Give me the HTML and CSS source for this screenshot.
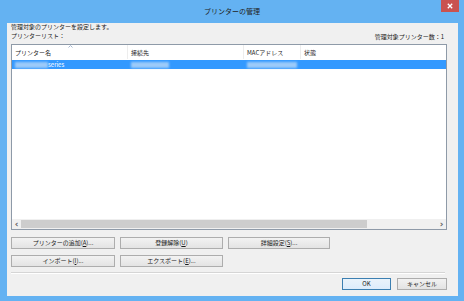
FILE: index.html
```html
<!DOCTYPE html>
<html lang="ja">
<head>
    <meta charset="UTF-8">
    <title>プリンターの管理</title>
    <link rel="stylesheet" href="styles.css">
</head>
<body>
    <div class="window">
        <div class="titlebar">
            <span class="title">プリンターの管理</span>
            <span class="close">
                <svg width="6" height="6" viewBox="0 0 6 6"><path d="M0.8 0.8 L5.2 5.2 M5.2 0.8 L0.8 5.2" stroke="#fff" stroke-width="1.3"/></svg>
            </span>
        </div>

        <div class="client">
            <div class="intro">管理対象のプリンターを設定します。</div>
            <div class="list-caption">
                <span class="label">プリンターリスト：</span>
                <span class="count">管理対象プリンター数：1</span>
            </div>

            <div class="listview">
                <div class="header">
                    <div class="col c1">プリンター名
                        <svg class="sort" width="5" height="3" viewBox="0 0 5 3"><path d="M0.5 2.5 L2.5 0.5 L4.5 2.5" fill="none" stroke="#8fa6c4" stroke-width="0.8"/></svg>
                    </div>
                    <div class="col c2">接続先</div>
                    <div class="col c3">MACアドレス</div>
                    <div class="col c4">状態</div>
                </div>
                <div class="row selected">
                    <div class="col c1"><span class="blur w33"></span>series</div>
                    <div class="col c2"><span class="blur w38"></span></div>
                    <div class="col c3"><span class="blur w50"></span></div>
                    <div class="col c4"></div>
                </div>
                <div class="list-body"></div>
                <div class="hscroll">
                    <span class="arrow">‹</span>
                    <div class="track"><div class="thumb"></div></div>
                    <span class="arrow">›</span>
                </div>
            </div>

            <div class="btn-row first">
                <button class="btn w104">プリンターの追加(<u>A</u>)...</button>
                <button class="btn w103">登録解除(<u>U</u>)</button>
                <button class="btn w102">詳細設定(<u>S</u>)...</button>
            </div>
            <div class="btn-row">
                <button class="btn w104">インポート(<u>I</u>)...</button>
                <button class="btn w103">エクスポート(<u>E</u>)...</button>
            </div>

            <div class="separator"></div>

            <div class="dialog-buttons">
                <button class="btn default">OK</button>
                <button class="btn cancel">キャンセル</button>
            </div>
        </div>
    </div>
</body>
</html>
```

FILE: styles.css
```css
* { margin: 0; padding: 0; box-sizing: border-box; }

body {
    font-family: "Noto Sans CJK JP", "Noto Sans", sans-serif;
    font-size: 6px;
    color: #1a1a1a;
    background: #ffffff;
}

.window {
    width: 464px;
    height: 301px;
    background: #64b2f2;
    display: flex;
    flex-direction: column;
}

.titlebar {
    height: 23px;
    position: relative;
    display: flex;
    align-items: center;
    justify-content: center;
}

.title {
    font-size: 7px;
    color: #222222;
    margin-top: -1px;
}

.close {
    position: absolute;
    top: 0;
    right: 5px;
    width: 18px;
    height: 12px;
    background: #c9524f;
    display: flex;
    align-items: center;
    justify-content: center;
}

.client {
    flex: 1;
    margin: 0 6px 5px 7px;
    background: #f0f0f0;
    padding: 0 11px 0 4px;
    display: flex;
    flex-direction: column;
}

.intro {
    line-height: 7px;
    height: 8px;
}

.list-caption {
    height: 13px;
    display: flex;
    justify-content: space-between;
}

.list-caption .label {
    line-height: 8px;
    margin-top: 1px;
}

.list-caption .count {
    line-height: 8px;
    margin-top: 2px;
    margin-right: 3px;
}

.listview {
    height: 186px;
    background: #ffffff;
    border: 1px solid #8e9aa8;
    display: flex;
    flex-direction: column;
}

.header {
    height: 14px;
    display: flex;
    flex-shrink: 0;
}

.header .col {
    border-right: 1px solid #ededed;
    line-height: 13px;
    padding-top: 1px;
    position: relative;
}

.header .c4 { border-right: none; }

.sort {
    position: absolute;
    left: 56px;
    top: 0;
}

.col {
    padding-left: 3px;
    white-space: nowrap;
    display: flex;
    align-items: center;
}

.c1 { width: 116px; }
.c2 { width: 116px; }
.c3 { width: 57px; }
.c4 { flex: 1; }

.row {
    height: 9px;
    display: flex;
    flex-shrink: 0;
    margin-top: 1px;
}

.row.selected {
    background: #3399ff;
    color: #ffffff;
}

.row .col { padding-left: 3px; }

.blur {
    display: inline-block;
    height: 6px;
    background: #9ccaf9;
    filter: blur(1px);
}

.w33 { width: 33px; }
.w38 { width: 38px; }
.w50 { width: 50px; }

.list-body { flex: 1; }

.hscroll {
    height: 10px;
    display: flex;
    align-items: center;
    background: #f0f0f0;
    flex-shrink: 0;
}

.arrow {
    width: 9px;
    text-align: center;
    font-size: 9px;
    line-height: 9px;
    color: #606060;
    font-family: "DejaVu Sans", sans-serif;
    font-weight: bold;
}

.track {
    flex: 1;
    height: 10px;
    display: flex;
    align-items: center;
}

.thumb {
    width: 346px;
    height: 8px;
    background: #cdcdcd;
}

.btn-row {
    display: flex;
    gap: 5px;
    margin-top: 6px;
}

.btn-row.first { margin-top: 7px; }

.btn {
    height: 12px;
    font-family: inherit;
    font-size: 6px;
    color: #1a1a1a;
    background: linear-gradient(#f2f2f2, #e3e3e3);
    border: 1px solid #adadad;
    line-height: 10px;
}

.btn u { text-decoration: underline; }

.w104 { width: 104px; }
.w103 { width: 103px; }
.w102 { width: 102px; }

.separator {
    height: 2px;
    margin-top: 5px;
    margin-right: 2px;
    border-top: 1px solid #d5d5d5;
    border-bottom: 1px solid #ffffff;
}

.dialog-buttons {
    display: flex;
    justify-content: flex-end;
    gap: 6px;
    margin-top: 4px;
}

.dialog-buttons .btn { height: 12px; }

.btn.default {
    width: 49px;
    border-color: #3c7fb1;
    background: linear-gradient(#eaf3fb, #dcecfc);
}

.btn.cancel { width: 50px; }
```
